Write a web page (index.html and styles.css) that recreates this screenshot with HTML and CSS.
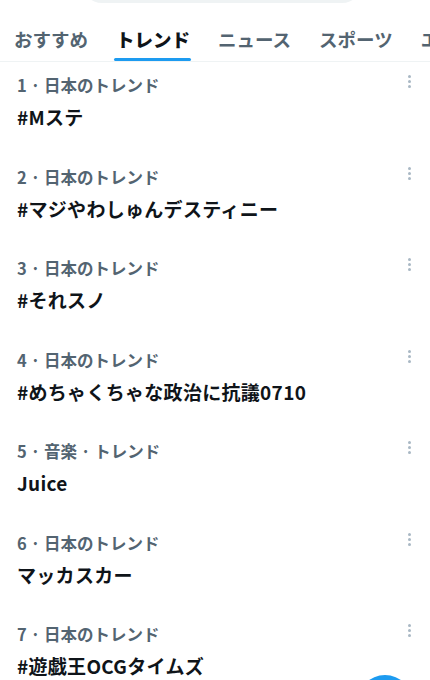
FILE: index.html
```html
<!DOCTYPE html>
<html lang="ja">
<head>
<meta charset="utf-8">
<link rel="stylesheet" href="styles.css">
</head>
<body>
<div class="search"></div>
<nav class="tabs">
  <div class="tab">おすすめ</div>
  <div class="tab active">トレンド</div>
  <div class="tab">ニュース</div>
  <div class="tab">スポーツ</div>
  <div class="tab">エンタメ</div>
</nav>
<main class="list">
  <div class="trend"><div class="meta">1 · 日本のトレンド</div><div class="title">#Mステ</div><span class="more"><i></i><i></i><i></i></span></div>
  <div class="trend"><div class="meta">2 · 日本のトレンド</div><div class="title">#マジやわしゅんデスティニー</div><span class="more"><i></i><i></i><i></i></span></div>
  <div class="trend"><div class="meta">3 · 日本のトレンド</div><div class="title">#それスノ</div><span class="more"><i></i><i></i><i></i></span></div>
  <div class="trend"><div class="meta">4 · 日本のトレンド</div><div class="title">#めちゃくちゃな政治に抗議0710</div><span class="more"><i></i><i></i><i></i></span></div>
  <div class="trend"><div class="meta">5 · 音楽 · トレンド</div><div class="title">Juice</div><span class="more"><i></i><i></i><i></i></span></div>
  <div class="trend"><div class="meta">6 · 日本のトレンド</div><div class="title">マッカスカー</div><span class="more"><i></i><i></i><i></i></span></div>
  <div class="trend"><div class="meta">7 · 日本のトレンド</div><div class="title">#遊戯王OCGタイムズ</div><span class="more"><i></i><i></i><i></i></span></div>
</main>
<div class="fab"></div>
</body>
</html>
```
FILE: styles.css
```css
html, body {
  margin: 0;
  padding: 0;
  background: #fff;
  overflow: hidden;
  height: 680px;
}
body {
  font-family: "Noto Sans CJK JP", "Noto Sans", sans-serif;
  color: #0f1419;
}
.search {
  height: 40px;
  margin-top: -37px;
  margin-left: 82px;
  width: 280px;
  border-radius: 20px;
  background: #eff3f4;
}
.tabs {
  display: flex;
  gap: 28px;
  height: 58px;
  padding-left: 14px;
  border-bottom: 1px solid #eff3f4;
  overflow: hidden;
  white-space: nowrap;
  align-items: flex-end;
}
.tab {
  position: relative;
  font-size: 18.5px;
  line-height: 24px;
  font-weight: 700;
  color: #536471;
  padding-bottom: 10px;
  flex: none;
}
.tab.active {
  color: #0f1419;
  font-weight: 900;
}
.tab.active::after {
  content: "";
  position: absolute;
  left: -2px;
  right: -1px;
  bottom: 0;
  height: 3px;
  border-radius: 2px;
  background: #1d9bf0;
}
.list {
  display: flex;
  flex-direction: column;
}
.trend {
  position: relative;
  height: 91.5px;
  box-sizing: border-box;
  padding: 13px 40px 0 17px;
  display: flex;
  flex-direction: column;
  gap: 10px;
}
.meta {
  font-size: 16.5px;
  line-height: 20px;
  font-weight: 700;
  color: #536471;
  white-space: nowrap;
}
.title {
  font-size: 19px;
  line-height: 24px;
  font-weight: 700;
  color: #0f1419;
  white-space: nowrap;
  letter-spacing: 0.3px;
}
.more {
  position: absolute;
  top: 13px;
  right: 19px;
  display: flex;
  flex-direction: column;
  gap: 2px;
}
.more i {
  display: block;
  width: 3px;
  height: 3px;
  border-radius: 50%;
  background: #a9b8c4;
}
.fab {
  position: fixed;
  left: 357px;
  top: 675px;
  width: 56px;
  height: 56px;
  border-radius: 50%;
  background: #1d9bf0;
}
```
